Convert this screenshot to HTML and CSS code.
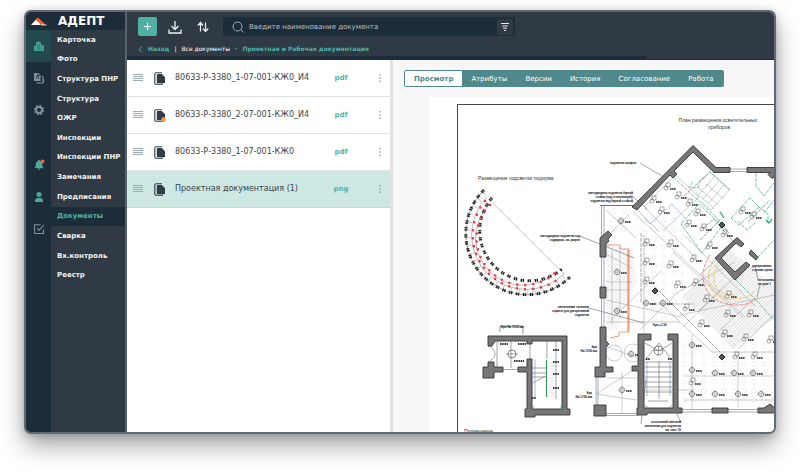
FILE: index.html
```html
<!DOCTYPE html>
<html lang="ru">
<head>
<meta charset="utf-8">
<title>АДЕПТ</title>
<link rel="stylesheet" href="styles.css">
</head>
<body>
<svg width="0" height="0" class="defs" aria-hidden="true">
  <symbol id="i-lines" viewBox="0 0 10 8"><path d="M0 .5h10M0 2.5h10M0 4.5h10M0 6.5h10" stroke="currentColor" stroke-width="1.200"/></symbol>
  <symbol id="i-file" viewBox="0 0 12 13"><path d="M8 .8H2.200A1.400 1.400 0 0 0 .8 2.200v8.600A1.400 1.400 0 0 0 2.200 12.300H9" fill="none" stroke="#303b45" stroke-width="1.100"/><path d="M3.800 2h4L11 5.200v5.300a.8.8 0 0 1-.8.8H3.800a1 1 0 0 1-1-1V3a1 1 0 0 1 1-1z" fill="#303b45"/></symbol>
  <symbol id="i-dots" viewBox="0 0 4 10"><g fill="#8b9399"><circle cx="2" cy="1.8" r=".8"/><circle cx="2" cy="5" r=".8"/><circle cx="2" cy="8.2" r=".8"/></g></symbol>
</svg>
<div class="window">
  <aside class="side">
    <div class="brand">
      <svg width="17" height="9" viewBox="0 0 17 9" aria-hidden="true"><path d="M1 8 6 2.500l3 3L11 8z" fill="#fff"/><path d="M5 3 8 .5 16 8h-4.500L8 4.500z" fill="#f26334"/><path d="M11 8h5.500" stroke="#fff" stroke-width=".8"/></svg>
      <span>АДЕПТ</span>
    </div>
    <div class="side-body">
      <div class="rail">
        <button class="on" aria-label="Объекты"><svg width="12" height="12" viewBox="0 0 12 12"><path d="M3 11V3l2.500-2L8 3v2h2l1 1v5H1V6l2-1" fill="#44a093"/><path d="M4 5h1M6 5h1M4 7h1M6 7h1M8.500 7h1M4 9h1M6 9h1M8.500 9h1" stroke="#23494d" stroke-width=".8"/></svg></button>
        <button aria-label="Файлы"><svg width="12" height="12" viewBox="0 0 12 12"><path d="M1 1h4.500l2 2v6H1z" fill="#83919b"/><path d="M8.500 4.500H10V11H4v-1M10.500 7v4" stroke="#83919b" fill="none"/><path d="m3 7 1.500-4L6 7M5 1v2.500h2" stroke="#1d2c39" fill="none" stroke-width=".8"/></svg></button>
        <button aria-label="Настройки"><svg width="12" height="12" viewBox="0 0 12 12"><circle cx="6" cy="6" r="4.400" fill="none" stroke="#83919b" stroke-width="1.600" stroke-dasharray="1.700 1.756"/><circle cx="6" cy="6" r="3" fill="none" stroke="#83919b" stroke-width="2"/></svg></button>
        <button class="gap" aria-label="Уведомления"><svg width="12" height="12" viewBox="0 0 12 12"><path d="M2 9V8l1-1V5a3 3 0 0 1 2.300-3V1h1.400v1A3 3 0 0 1 9 5v2l1 1v1zM5 10h2.200q-1 1.500-2.200 0z" fill="#4aa99c" stroke="#4aa99c" stroke-width=".5"/><circle cx="9.500" cy="2.500" r="2" fill="#f26334"/></svg></button>
        <button aria-label="Профиль"><svg width="12" height="12" viewBox="0 0 12 12"><circle cx="6" cy="3.500" r="2.500" fill="#4aa99c"/><path d="M2 11V9.500C2 7.500 4 7 6 7s4 .5 4 2.500V11z" fill="#4aa99c"/></svg></button>
        <button aria-label="Задачи"><svg width="12" height="12" viewBox="0 0 12 12" fill="none" stroke="#83919b" stroke-width="1.100"><path d="M7.500 1.800H1.500v8.700h9V6.500M4 5l2 2.300L10.800 2"/></svg></button>
      </div>
      <nav class="menu">
        <a href="#">Карточка</a><a href="#">Фото</a><a href="#">Структура ПНР</a><a href="#">Структура</a><a href="#">ОЖР</a><a href="#">Инспекции</a><a href="#">Инспекции ПНР</a><a href="#">Замечания</a><a href="#">Предписания</a><a href="#" class="on">Документы</a><a href="#">Сварка</a><a href="#">Вх.контроль</a><a href="#">Реестр</a>
      </nav>
    </div>
  </aside>
  <div class="main">
    <header class="top">
      <div class="tools">
        <button class="add" aria-label="Добавить"><svg width="9" height="9" viewBox="0 0 9 9"><path d="M4.500 1v7M1 4.500h7" stroke="#fff" stroke-width="1.200"/></svg></button>
        <button class="tool" aria-label="Загрузить"><svg width="14" height="14" viewBox="0 0 14 14" fill="none" stroke="#eef1f2" stroke-width="1.300"><path d="M7 1v8.500M3.500 6 7 9.500 10.500 6M1 9.500V13h12V9.500"/></svg></button>
        <button class="tool" aria-label="Сортировка"><svg width="14" height="14" viewBox="0 0 14 14" fill="none" stroke="#eef1f2" stroke-width="1.200"><path d="M4.500 11.500V3M1.800 5.500l2.700-3 2.500 3M9.500 2.500V11M7 8.500l2.500 3 2.700-3"/></svg></button>
        <div class="search">
          <svg width="12" height="12" viewBox="0 0 12 12" fill="none" stroke="#a5afb6"><circle cx="5.500" cy="5.500" r="4.500"/><path d="m8.800 8.800 2.700 2.700"/></svg>
          <input type="text" placeholder="Введите наименование документа" aria-label="Поиск документа">
          <button aria-label="Фильтр"><svg width="10" height="10" viewBox="0 0 10 10" stroke="#e4e8ea" stroke-width="1.100"><path d="M1 1.500h8M2.300 4h5.400M3 6.300h4M4 8.500h2"/></svg></button>
        </div>
      </div>
      <nav class="crumbs">
        <svg width="5" height="7" viewBox="0 0 5 7" fill="none" stroke="#4fb3a5"><path d="M4 .5 1 3.500l3 3"/></svg>
        <a href="#">Назад</a><i>|</i><a href="#" class="plain">Все документы</a><b>•</b><a href="#">Проектная и Рабочая документация</a>
      </nav>
      <div class="progress"></div>
    </header>
    <div class="content">
      <ul class="files">
        <li><svg class="grip"><use href="#i-lines"/></svg><svg class="doc"><use href="#i-file"/></svg><span class="name">80633-Р-3380_1-07-001-КЖ0_И4</span><span class="ext">pdf</span><button aria-label="Действия"><svg class="dots"><use href="#i-dots"/></svg></button></li>
        <li><svg class="grip"><use href="#i-lines"/></svg><svg class="doc"><use href="#i-file"/><circle cx="9.500" cy="10.500" r="2.300" fill="#f19a47"/></svg><span class="name">80633-Р-3380_2-07-001-КЖ0_И4</span><span class="ext">pdf</span><button aria-label="Действия"><svg class="dots"><use href="#i-dots"/></svg></button></li>
        <li><svg class="grip"><use href="#i-lines"/></svg><svg class="doc"><use href="#i-file"/></svg><span class="name">80633-Р-3380_1-07-001-КЖ0</span><span class="ext">pdf</span><button aria-label="Действия"><svg class="dots"><use href="#i-dots"/></svg></button></li>
        <li class="on"><svg class="grip"><use href="#i-lines"/></svg><svg class="doc"><use href="#i-file"/></svg><span class="name">Проектная документация (1)</span><span class="ext">png</span><button aria-label="Действия"><svg class="dots"><use href="#i-dots"/></svg></button></li>
      </ul>
      <section class="preview">
        <div class="tabs">
          <button class="on">Просмотр</button><button>Атрибуты</button><button>Версии</button><button>История</button><button>Согласование</button><button>Работа</button>
        </div>
        <svg class="paper" viewBox="429 97 345 335" preserveAspectRatio="xMinYMin slice">
          <defs>
            <symbol id="lamp" viewBox="-6 -6 12 12" overflow="visible"><circle r="2.600" fill="none" stroke="#444" stroke-width=".6"/><path d="M-4 0h8M0-4v8" stroke="#777" stroke-width=".4"/><path d="M4 1h6" stroke="#222" stroke-width="1.500" stroke-dasharray="1.400 .4"/></symbol>
            <symbol id="fix" viewBox="-6 -6 12 12" overflow="visible"><rect x="-1" y="-4" width="4" height="4" fill="none" stroke="#555" stroke-width=".5"/><circle cx="-1" cy="1" r="2" fill="none" stroke="#555" stroke-width=".5"/><path d="M3 2h6" stroke="#222" stroke-width="1.500" stroke-dasharray="1.400 .4"/></symbol>
            <symbol id="col" viewBox="-6 -6 12 12" overflow="visible"><circle r="5" fill="none" stroke="#a5d39a" stroke-width=".5" stroke-dasharray="1 1"/><path d="M-3 0 0-3 3 0 0 3z" fill="#555" stroke="#222"/></symbol>
            <pattern id="hatch" width="5" height="5" patternUnits="userSpaceOnUse" patternTransform="rotate(-45)"><path d="M0 1h5M0 3.500h5" stroke="#b2b2b2" stroke-width=".5"/></pattern>
            <pattern id="seats" width="10" height="9" patternUnits="userSpaceOnUse"><circle cx="4" cy="4" r="2.300" fill="none" stroke="#cfcfcf" stroke-width=".5" stroke-dasharray="1.500 .6"/></pattern>
          </defs>
          <path d="M457.500 432V104.500H776" fill="none" stroke="#444"/>
          <g class="title"><text x="718" y="122" text-anchor="middle">План размещения осветительных</text><text x="719" y="129" text-anchor="middle">приборов</text><text x="478" y="180">Размещение подсветки подиума</text><text x="464" y="433">Примечание</text></g>
          <!-- podium lighting -->
          <g fill="none">
            <path d="m493 203 71 71" stroke="#999" stroke-width=".5"/>
            <g stroke="#222">
              <path d="M484 190A61 61 0 0 0 570 277" stroke-width=".5" stroke-dasharray="3 1"/>
              <path d="M484 190A61 61 0 0 0 570 277" stroke-width="3" stroke-dasharray="1.500 .5 1.500 3.500"/>
              <path d="M492 198A50 50 0 0 0 562 269" stroke-width="3" stroke-dasharray="1.500 .5 1.500 3.500"/>
              <path d="M487 197A54 54 0 0 0 565 273M489 205A47 47 0 0 0 557 271" stroke="#777" stroke-width=".5"/>
              <path d="M485 194A57 57 0 0 0 566 275" stroke-width="5" stroke="#999" stroke-dasharray=".5 7.500"/>
            </g>
            <g stroke="#f0383d" stroke-linecap="round" stroke-width="2.600"><path d="M485 201A54 54 0 0 0 561 277" stroke-dasharray="0 8"/><path d="M490 205A47 47 0 0 0 557 271" stroke-dasharray="0 8"/></g>
          </g>
          <!-- floor surfaces -->
          <path d="m683 297 46-48 45 37v32l-41 31z" fill="url(#hatch)"/>
          <path d="m607 245 25 5 5 30-20 50h-10z" fill="url(#hatch)" opacity=".6"/>
          <path d="M636 215h48v110h-48zM682 342h92v62h-92zM608 208h22v27h-22z" fill="url(#seats)"/>
          <g fill="none" stroke="#999" stroke-width=".5">
            <path d="m633 212 112 105M629 214l-19 20M645 218l15 14M673 252l70 66M685 236l70 70M644 207l31-32 24 22-36 34M606 210l30 28M606 254l26 14M640 330l38-38 57-30M611 320l50-49M606 300l75 17M680 315l94-20M700 310l42-40M720 330l35-32M738 349l36-34M660 303l52 49 62 0M640 390l54 0M606 322h74M606 282h26M612 250v75M620 246v72M644 235v98M646 304h48M692 335v74M738 352v56M684 376h90M684 400h90M606 290h24M602 345l34 12M596 394l36-23M596 394l40 6M607 378h30M622 372v42M645 208l51 50M721 290l-38 37"/>
            <path d="m655 287 65 65M702 229l12-10 22 26M684 196l24-22M641 233v70M700 275l24-23" stroke="#555" stroke-dasharray="4 1"/>
            <path d="m702 180 8-8 20 17-19 21-9-8M706 184l18 15M699 188l19 17M696 192l18 17M714 177l-15 17M719 181l-16 18M724 185l-15 18"/>
          </g>
          <g fill="none" stroke="#56b98a" stroke-width=".8">
            <path d="m673 177 25 23 19 18 12 15M681 224l18-20 23 22-20 27zM700 240l20-20M709 171l20 19M693 182l-4 5 9 1 2-8 7-5M756 173v13l8 10 10-13M764 213l10-13M758 206l10 8v9M731 218l19-20 9 9-20 18zM748 222l22-22M738 221l9 9 9-8M757 258l17-18M736 280l22 22 16 18" stroke-dasharray="4 1"/>
            <path d="m766 220 3 3 3-4M724 218l-4-6" stroke="#18a864" stroke-width="1.200"/>
          </g>
          <path d="m637 209 13 15 22-20 13 14" fill="none" stroke="#6388d0" stroke-width=".8" stroke-dasharray="1.500 1"/>
          <path d="M606 245h14v4h9v83h-10v4l-9 2" fill="none" stroke="#f28c70" stroke-width=".9"/>
          <path d="M628 250v82" stroke="#ef704f" stroke-width="1"/>
          <g fill="none" stroke-width=".9" stroke-dasharray="4 1"><path d="M710 255c-16 23-4 51 28 50 8 0 17-3 20-8" stroke="#f08181"/><path d="M714 260c-12 18-4 41 20 39 9 0 16-3 20-7M718 265c-10 15-2 31 17 30" stroke="#f2c45b"/></g>
          <!-- fixtures -->
          <g>
            <use href="#lamp" x="615" y="215" width="12" height="12"/><use href="#fix" x="647" y="194" width="12" height="12"/><use href="#fix" x="661" y="181" width="12" height="12"/><use href="#fix" x="672" y="190" width="12" height="12"/><use href="#fix" x="683" y="197" width="12" height="12"/><use href="#fix" x="655" y="205" width="12" height="12"/><use href="#fix" x="691" y="207" width="12" height="12"/><use href="#fix" x="682" y="218" width="12" height="12"/><use href="#fix" x="697" y="222" width="12" height="12"/>
            <use href="#fix" x="640" y="237" width="12" height="12"/><use href="#fix" x="664" y="238" width="12" height="12"/><use href="#fix" x="640" y="256" width="12" height="12"/><use href="#fix" x="664" y="259" width="12" height="12"/><use href="#fix" x="687" y="253" width="12" height="12"/><use href="#fix" x="640" y="275" width="12" height="12"/><use href="#fix" x="671" y="279" width="12" height="12"/><use href="#fix" x="689" y="277" width="12" height="12"/><use href="#fix" x="703" y="240" width="12" height="12"/><use href="#fix" x="718" y="228" width="12" height="12"/>
            <use href="#fix" x="736" y="205" width="12" height="12"/><use href="#fix" x="747" y="210" width="12" height="12"/><use href="#lamp" x="611" y="266" width="12" height="12"/><use href="#lamp" x="611" y="305" width="12" height="12"/><use href="#lamp" x="640" y="297" width="12" height="12"/><use href="#lamp" x="657" y="297" width="12" height="12"/><use href="#fix" x="700" y="293" width="12" height="12"/><use href="#fix" x="680" y="302" width="12" height="12"/><use href="#fix" x="695" y="318" width="12" height="12"/><use href="#fix" x="721" y="308" width="12" height="12"/><use href="#fix" x="744" y="308" width="12" height="12"/><use href="#fix" x="718" y="328" width="12" height="12"/><use href="#fix" x="739" y="332" width="12" height="12"/>
            <use href="#lamp" x="686" y="339" width="12" height="12"/><use href="#lamp" x="686" y="364" width="12" height="12"/><use href="#fix" x="686" y="376" width="12" height="12"/><use href="#lamp" x="686" y="388" width="12" height="12"/><use href="#lamp" x="709" y="388" width="12" height="12"/><use href="#lamp" x="732" y="388" width="12" height="12"/><use href="#lamp" x="755" y="388" width="12" height="12"/><use href="#lamp" x="709" y="367" width="12" height="12"/><use href="#lamp" x="728" y="367" width="12" height="12"/><use href="#lamp" x="747" y="367" width="12" height="12"/><use href="#fix" x="730" y="350" width="12" height="12"/><use href="#fix" x="748" y="350" width="12" height="12"/><use href="#fix" x="764" y="334" width="12" height="12"/>
            <use href="#lamp" x="616" y="384" width="12" height="12"/><use href="#lamp" x="625" y="348" width="12" height="12"/><use href="#fix" x="722" y="289" width="12" height="12"/>
            <use href="#col" x="716" y="219" width="12" height="12"/><use href="#col" x="649" y="285" width="12" height="12"/><use href="#col" x="716" y="351" width="12" height="12"/>
          </g>
          <g fill="none" stroke="#999" stroke-width=".5"><circle cx="614" cy="353" r="8"/><circle cx="633" cy="353" r="9"/></g>
          <!-- windows -->
          <g fill="none" stroke="#7c87a0" stroke-width=".7"><path d="M730 169h17M730 171.500h17M601.500 206v32M604 206v32M601.500 257v30M604 257v30M601.500 298v29M604 298v29M596 377v28M598 377v28M606 413.500h32M606 415.500h32M682 409.500h30M682 412h30M728 409.500h30M728 412h30M503 369.500h15"/><path d="M600 205.500h35" stroke="#333"/></g>
          <!-- walls -->
          <g fill="#777" stroke="#333" stroke-width=".9">
            <path d="M632 207 693 145.500 716 167.500H730V172.500H714L693 152 674 171l3 3-4 4-3-3-33 35z"/>
            <path d="M747 167.500h28v9l-3 2-4-4 2-2h-23zM600 238l8-7 4 4-4 4 1 2-3 3v13h-6zM600 287h6v11h-6zM600 327h6v14l3 3-3 3v20h7v5h-8v5h-10v-10h5zM594 405h12v11h-12zM637 408v7h10v-2h35v-5h-4v-74h-10v6h5v68h-29v-68h7v-6h-13v32h-6v5h6v37zM712 408h16v5h-16zM758 408h6l6-4 5 4v5h-17z"/>
            <path d="M715 258 737 237.500 744 244l-3 3-5-4-15 15 14 14 11-10 4 3-15 15zM751 250l7 7-2 3-7-6z"/>
            <path d="M488 336h79v73h3v6h-35v2h-10v-8h2v-37h-9v-5h9v-8h5v50h30v-68h-30v3h-5v-3h-32l-3 5h-4zM488 362h6v5h9v5h-9v6h-11v-11h5z"/>
          </g>
          <!-- stairs -->
          <g fill="none" stroke="#666" stroke-width=".6">
            <path d="M645 362h27M645 367h27M645 372h27M645 377h27M645 382h27M645 387h27M645 392h27M659 361v38M648 401h20M645 343l14 8 13-8M645 360l14-17 13 17"/><circle cx="658.500" cy="350.500" r="4.500" stroke="#333"/><path d="M658.500 346v9M654 350.500h9"/>
            <path d="M532 368h14M532 373h14M532 377h14M533 383l12-7M511 341v27M497 341v26M547 341v18M556 341v58M530 341v18"/><circle cx="512" cy="354" r="4" stroke="#333"/><path d="M506 354h12M488 346c4 1 7 5 7 8s-3 6-7 8"/><path d="M552 362v35" stroke-width="5" stroke="#ddd" stroke-dasharray=".5 1"/>
            <path d="M535 360v37M647 362v34M670 362v34" stroke="#6d8cd4"/><path d="M546.500 360v37" stroke="#399557" stroke-width="1.200"/><path d="m534 406-2 3M560 406l3 3M645 405l3 3M672 405l-3 3" stroke="#399557"/>
            <path d="M500 332v-6h23v8" stroke="#444"/>
            <path d="M500 344h8M518 344h8M514 361h10M553 350h6M553 362h6M553 374h6M553 388h6M532 398h4M646 359h4M668 359h4" stroke="#333" stroke-width="2" stroke-dasharray="1.500 .7"/>
            <path d="M632 196l15 13M580 236l54 22M589 308l55 15M640 163l22 13M646 379l-5 45M674 408l7 15M758 280l-3-15M757 297l3-12"/>
          </g>
          <g class="note">
            <text x="610" y="164">подсветка шкафов</text>
            <g text-anchor="end"><text x="633" y="194">светодиодная подсветка барной</text><text x="633" y="198">стойки (под столешницей),</text><text x="633" y="202">подсветка над барной стойкой</text><text x="580" y="237">светодиодная подсветка под</text><text x="580" y="241">подиумом, см. разрез</text><text x="589" y="308">светильники точечные</text><text x="589" y="312">софиты для декоративной</text><text x="589" y="316">подсветки</text><text x="597" y="348">Бра</text><text x="597" y="352">H= 1550 мм</text><text x="592" y="394">Бра</text><text x="592" y="398">H= 1700 мм</text><text x="681" y="423">потолочный световой</text><text x="681" y="427">светильник для подсветки</text><text x="681" y="431">см. лист 10</text></g>
            <text x="501" y="328">Бра H= 1550 мм</text><text x="752" y="267">декоративная</text><text x="752" y="271">ступени сцены</text><text x="758" y="281">потолочная</text><text x="758" y="285">на цоке 1</text><text x="653" y="326">Бра +2.50</text>
          </g>
        </svg>
      </section>
    </div>
  </div>
</div>
</body>
</html>
```

FILE: styles.css
```css
* { box-sizing: border-box; }
body { margin: 0; background: #fff; font: 7px/10px "DejaVu Sans", sans-serif; color: #3c454c; }
button { border: 0; padding: 0; background: none; font: inherit; color: inherit; display: grid; place-items: center; }
a { color: inherit; text-decoration: none; }
svg { display: block; flex: none; }
.defs { position: absolute; }

.window {
  display: flex;
  height: calc(100vh - 48px);
  margin: 10px 24px 38px;
  border: 2px solid #5f6a72;
  border-radius: 7px;
  overflow: hidden;
  background: #fff;
  box-shadow: 0 12px 24px rgba(0, 0, 0, .34), 0 2px 8px rgba(0, 0, 0, .2);
}

.side { flex: none; width: 101px; display: flex; flex-direction: column; background: #303a44; border-right: 2px solid #56616a; }
.brand { height: 18px; display: flex; align-items: center; gap: 11px; padding-left: 4px; background: #1d2c39; color: #fff; font: bold 12px/18px "DejaVu Sans", sans-serif; }
.side-body { flex: 1; display: flex; min-height: 0; }
.rail { width: 25px; background: #1d2c39; }
.rail button { width: 100%; height: 32px; }
.rail .on { background: #23494d; }
.rail .gap { margin-top: 23px; }
.menu { flex: 1; height: 255px; display: grid; grid-template-rows: repeat(13, 1fr); font-weight: bold; color: #f2f4f5; }
.menu a { display: flex; align-items: center; padding-left: 6px; white-space: nowrap; }
.menu .on { background: #1d2c39; color: #4fb3a5; }

.main { flex: 1; min-width: 0; display: flex; flex-direction: column; }
.top { display: flex; flex-direction: column; height: 48px; background: #303a44; border-bottom: 1px solid #1d2c39; padding: 4px 11px 0; }
.tools { display: flex; align-items: center; height: 21px; }
.add { width: 19px; height: 19px; border-radius: 2px; background: #4fb0a3; }
.tool { width: 28px; height: 19px; }
.add + .tool { margin-left: 4px; }
.search { display: flex; align-items: center; flex: 0 1 292px; height: 19px; margin-left: 6px; padding: 0 2px 0 9px; gap: 5px; border-radius: 2px; background: #1d2c39; }
.search input { flex: 1; min-width: 0; border: 0; padding: 0; outline: 0; background: none; font: inherit; color: #fff; }
.search input::placeholder { color: #b9c0c5; opacity: 1; }
.search button { width: 16px; height: 16px; border-radius: 2px; background: #303a44; }
.crumbs { display: flex; align-items: center; gap: 5px; height: 10px; margin-top: 7px; font-size: 6px; font-weight: bold; color: #4fb3a5; white-space: nowrap; }
.crumbs i { font-style: normal; font-weight: normal; color: #fff; }
.crumbs b { color: #4fb3a5; font-size: 4px; }
.crumbs .plain { color: #fff; font-weight: normal; }
.progress { width: 83%; height: 3px; margin: auto 0 0 -11px; background: #1d2c39; }

.content { flex: 1; min-height: 0; display: flex; }
.files { flex: 0 0 266px; margin: 0; padding: 0; list-style: none; border-right: 3px solid #e1e1e1; }
.files li { display: flex; align-items: center; height: 37px; padding: 0 8px 0 6px; border-bottom: 1px solid #dfe1e2; }
.files .on { background: #cde7e3; border-color: #c2dad7; }
.grip { width: 10px; height: 8px; color: #9daab4; }
.doc { width: 12px; height: 13px; margin: 0 9px 0 11px; }
.name { flex: 1; font-size: 8px; white-space: nowrap; }
.ext { width: 20px; margin-right: 27px; text-align: center; color: #4fb3a5; font-weight: bold; }
.dots { width: 4px; height: 10px; }

.preview { flex: 1; min-width: 0; display: flex; flex-direction: column; background: #f7f7f7; }
.tabs { align-self: flex-start; display: flex; height: 17px; margin: 10px 0 10px 11px; padding: 1px; border-radius: 2px; background: #50898b; color: #fff; }
.tabs button { padding: 0 9px; }
.tabs .on { background: #fff; color: #46898b; font-weight: bold; }
.paper { flex: 1; min-height: 0; margin-left: 36px; background: #fff; }
.title { font: 5px "Liberation Sans", sans-serif; fill: #333; }
.note { font: 3px "Liberation Sans", sans-serif; fill: #111; stroke: #111; stroke-width: .1; }
```
